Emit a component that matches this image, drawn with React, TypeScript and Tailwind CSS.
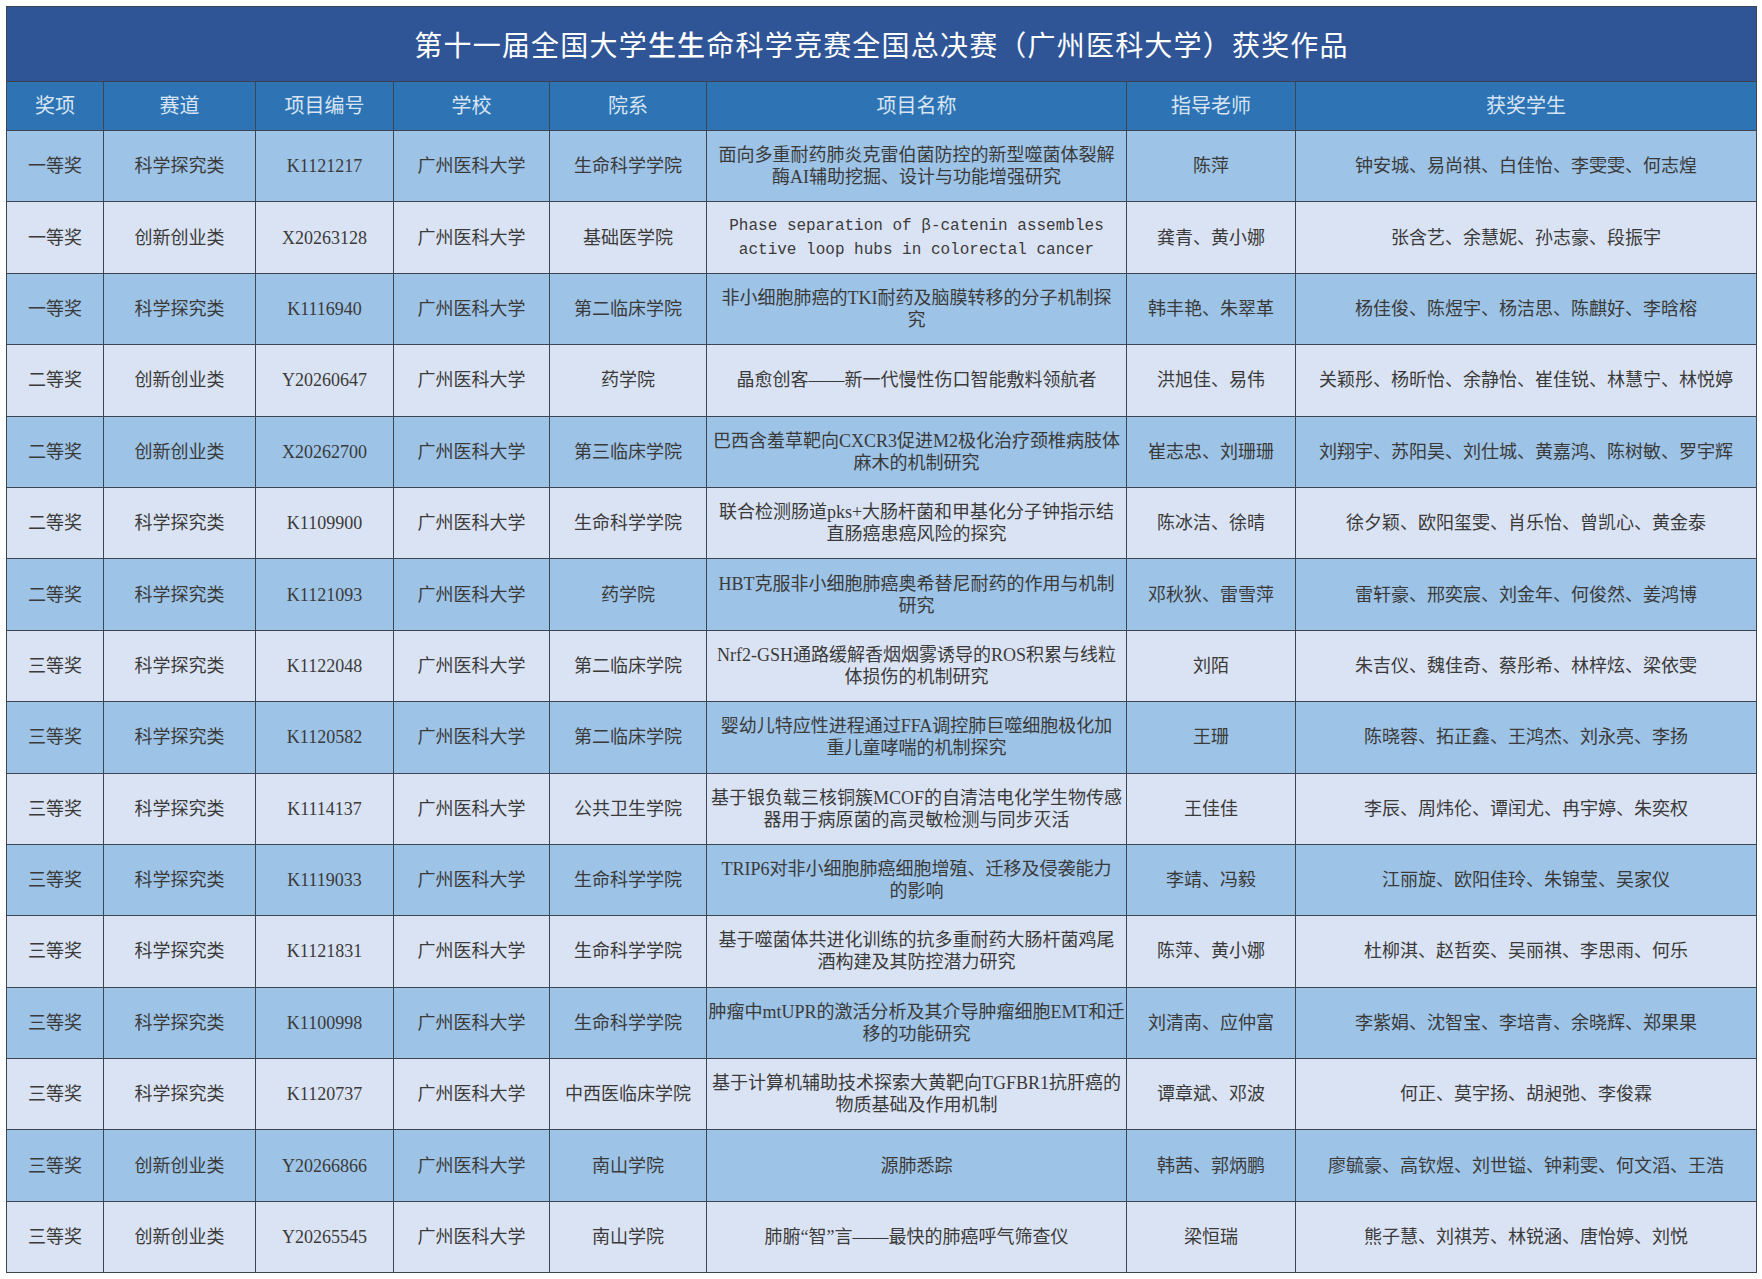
const HEADERS = ['奖项', '赛道', '项目编号', '学校', '院系', '项目名称', '指导老师', '获奖学生'];
const COL_WIDTHS = ['w-[97px]', 'w-[152px]', 'w-[138px]', 'w-[156px]', 'w-[157px]', 'w-[420px]', 'w-[169px]', 'w-[461px]'];

type Row = {
    award: string;
    track: string;
    code: string;
    dept: string;
    title: string[];
    mono?: boolean;
    teacher: string;
    students: string;
};

const ROWS: Row[] = [
    { award: '一等奖', track: '科学探究类', code: 'K1121217', dept: '生命科学学院', title: ['面向多重耐药肺炎克雷伯菌防控的新型噬菌体裂解', '酶AI辅助挖掘、设计与功能增强研究'], teacher: '陈萍', students: '钟安城、易尚祺、白佳怡、李雯雯、何志煌' },
    { award: '一等奖', track: '创新创业类', code: 'X20263128', dept: '基础医学院', title: ['Phase separation of β-catenin assembles', 'active loop hubs in colorectal cancer'], mono: true, teacher: '龚青、黄小娜', students: '张含艺、余慧妮、孙志豪、段振宇' },
    { award: '一等奖', track: '科学探究类', code: 'K1116940', dept: '第二临床学院', title: ['非小细胞肺癌的TKI耐药及脑膜转移的分子机制探', '究'], teacher: '韩丰艳、朱翠革', students: '杨佳俊、陈煜宇、杨洁思、陈麒好、李晗榕' },
    { award: '二等奖', track: '创新创业类', code: 'Y20260647', dept: '药学院', title: ['晶愈创客——新一代慢性伤口智能敷料领航者'], teacher: '洪旭佳、易伟', students: '关颖彤、杨昕怡、余静怡、崔佳锐、林慧宁、林悦婷' },
    { award: '二等奖', track: '创新创业类', code: 'X20262700', dept: '第三临床学院', title: ['巴西含羞草靶向CXCR3促进M2极化治疗颈椎病肢体', '麻木的机制研究'], teacher: '崔志忠、刘珊珊', students: '刘翔宇、苏阳昊、刘仕城、黄嘉鸿、陈树敏、罗宇辉' },
    { award: '二等奖', track: '科学探究类', code: 'K1109900', dept: '生命科学学院', title: ['联合检测肠道pks+大肠杆菌和甲基化分子钟指示结', '直肠癌患癌风险的探究'], teacher: '陈冰洁、徐晴', students: '徐夕颖、欧阳玺雯、肖乐怡、曾凯心、黄金泰' },
    { award: '二等奖', track: '科学探究类', code: 'K1121093', dept: '药学院', title: ['HBT克服非小细胞肺癌奥希替尼耐药的作用与机制', '研究'], teacher: '邓秋狄、雷雪萍', students: '雷轩豪、邢奕宸、刘金年、何俊然、姜鸿博' },
    { award: '三等奖', track: '科学探究类', code: 'K1122048', dept: '第二临床学院', title: ['Nrf2-GSH通路缓解香烟烟雾诱导的ROS积累与线粒', '体损伤的机制研究'], teacher: '刘陌', students: '朱吉仪、魏佳奇、蔡彤希、林梓炫、梁依雯' },
    { award: '三等奖', track: '科学探究类', code: 'K1120582', dept: '第二临床学院', title: ['婴幼儿特应性进程通过FFA调控肺巨噬细胞极化加', '重儿童哮喘的机制探究'], teacher: '王珊', students: '陈晓蓉、拓正鑫、王鸿杰、刘永亮、李扬' },
    { award: '三等奖', track: '科学探究类', code: 'K1114137', dept: '公共卫生学院', title: ['基于银负载三核铜簇MCOF的自清洁电化学生物传感', '器用于病原菌的高灵敏检测与同步灭活'], teacher: '王佳佳', students: '李辰、周炜伦、谭闰尤、冉宇婷、朱奕权' },
    { award: '三等奖', track: '科学探究类', code: 'K1119033', dept: '生命科学学院', title: ['TRIP6对非小细胞肺癌细胞增殖、迁移及侵袭能力', '的影响'], teacher: '李靖、冯毅', students: '江丽旋、欧阳佳玲、朱锦莹、吴家仪' },
    { award: '三等奖', track: '科学探究类', code: 'K1121831', dept: '生命科学学院', title: ['基于噬菌体共进化训练的抗多重耐药大肠杆菌鸡尾', '酒构建及其防控潜力研究'], teacher: '陈萍、黄小娜', students: '杜柳淇、赵哲奕、吴丽祺、李思雨、何乐' },
    { award: '三等奖', track: '科学探究类', code: 'K1100998', dept: '生命科学学院', title: ['肿瘤中mtUPR的激活分析及其介导肿瘤细胞EMT和迁', '移的功能研究'], teacher: '刘清南、应仲富', students: '李紫娟、沈智宝、李培青、余晓辉、郑果果' },
    { award: '三等奖', track: '科学探究类', code: 'K1120737', dept: '中西医临床学院', title: ['基于计算机辅助技术探索大黄靶向TGFBR1抗肝癌的', '物质基础及作用机制'], teacher: '谭章斌、邓波', students: '何正、莫宇扬、胡昶弛、李俊霖' },
    { award: '三等奖', track: '创新创业类', code: 'Y20266866', dept: '南山学院', title: ['源肺悉踪'], teacher: '韩茜、郭炳鹏', students: '廖毓豪、高钦煜、刘世镒、钟莉雯、何文滔、王浩' },
    { award: '三等奖', track: '创新创业类', code: 'Y20265545', dept: '南山学院', title: ['肺腑“智”言——最快的肺癌呼气筛查仪'], teacher: '梁恒瑞', students: '熊子慧、刘祺芳、林锐涵、唐怡婷、刘悦' },
];

const cell = 'border-[1.5px] border-[#3d4552] text-center align-middle p-0';

export default function App() {
    return (
        <div className="w-[1762px] h-[1279px] bg-white pt-[6px] pl-[6px]" style={{ fontFamily: '"Liberation Serif", "Noto Sans CJK SC", serif' }}>
            <table className="table-fixed border-collapse w-[1750px]">
                <colgroup>
                    {COL_WIDTHS.map((w, i) => <col key={i} className={w} />)}
                </colgroup>
                <thead>
                    {/* Title bar */}
                    <tr className="h-[75px] bg-[#2f5597]">
                        <th colSpan={8} className={`${cell} text-white text-[28px] font-normal tracking-[1.2px]`} style={{ fontFamily: '"Noto Sans CJK SC", sans-serif' }}>
                            第十一届全国大学<span className="font-medium">生生</span>命科学竞赛全国总决赛（广州医科大学）获奖作品
                        </th>
                    </tr>
                    <tr className="h-[49px] bg-[#2e74b5]">
                        {HEADERS.map(h => (
                            <th key={h} className={`${cell} text-[#d6e4f4] text-[20px] font-normal`}>{h}</th>
                        ))}
                    </tr>
                </thead>
                <tbody className="text-[#3a3a3a] text-[18px] leading-[22px]">
                    {ROWS.map((r, i) => (
                        <tr key={r.code} className={`h-[71.4px] ${i % 2 === 0 ? 'bg-[#9dc3e6]' : 'bg-[#dae3f3]'}`}>
                            <td className={cell}>{r.award}</td>
                            <td className={cell}>{r.track}</td>
                            <td className={cell}>{r.code}</td>
                            <td className={cell}>广州医科大学</td>
                            <td className={cell}>{r.dept}</td>
                            <td className={`${cell} ${r.mono ? 'text-[16px] leading-[24px]' : ''}`} style={r.mono ? { fontFamily: '"Liberation Mono", monospace' } : undefined}>
                                {r.title.map((t, k) => <div key={k} className="whitespace-nowrap">{t}</div>)}
                            </td>
                            <td className={cell}>{r.teacher}</td>
                            <td className={`${cell} whitespace-nowrap`}>{r.students}</td>
                        </tr>
                    ))}
                </tbody>
            </table>
        </div>
    );
}
